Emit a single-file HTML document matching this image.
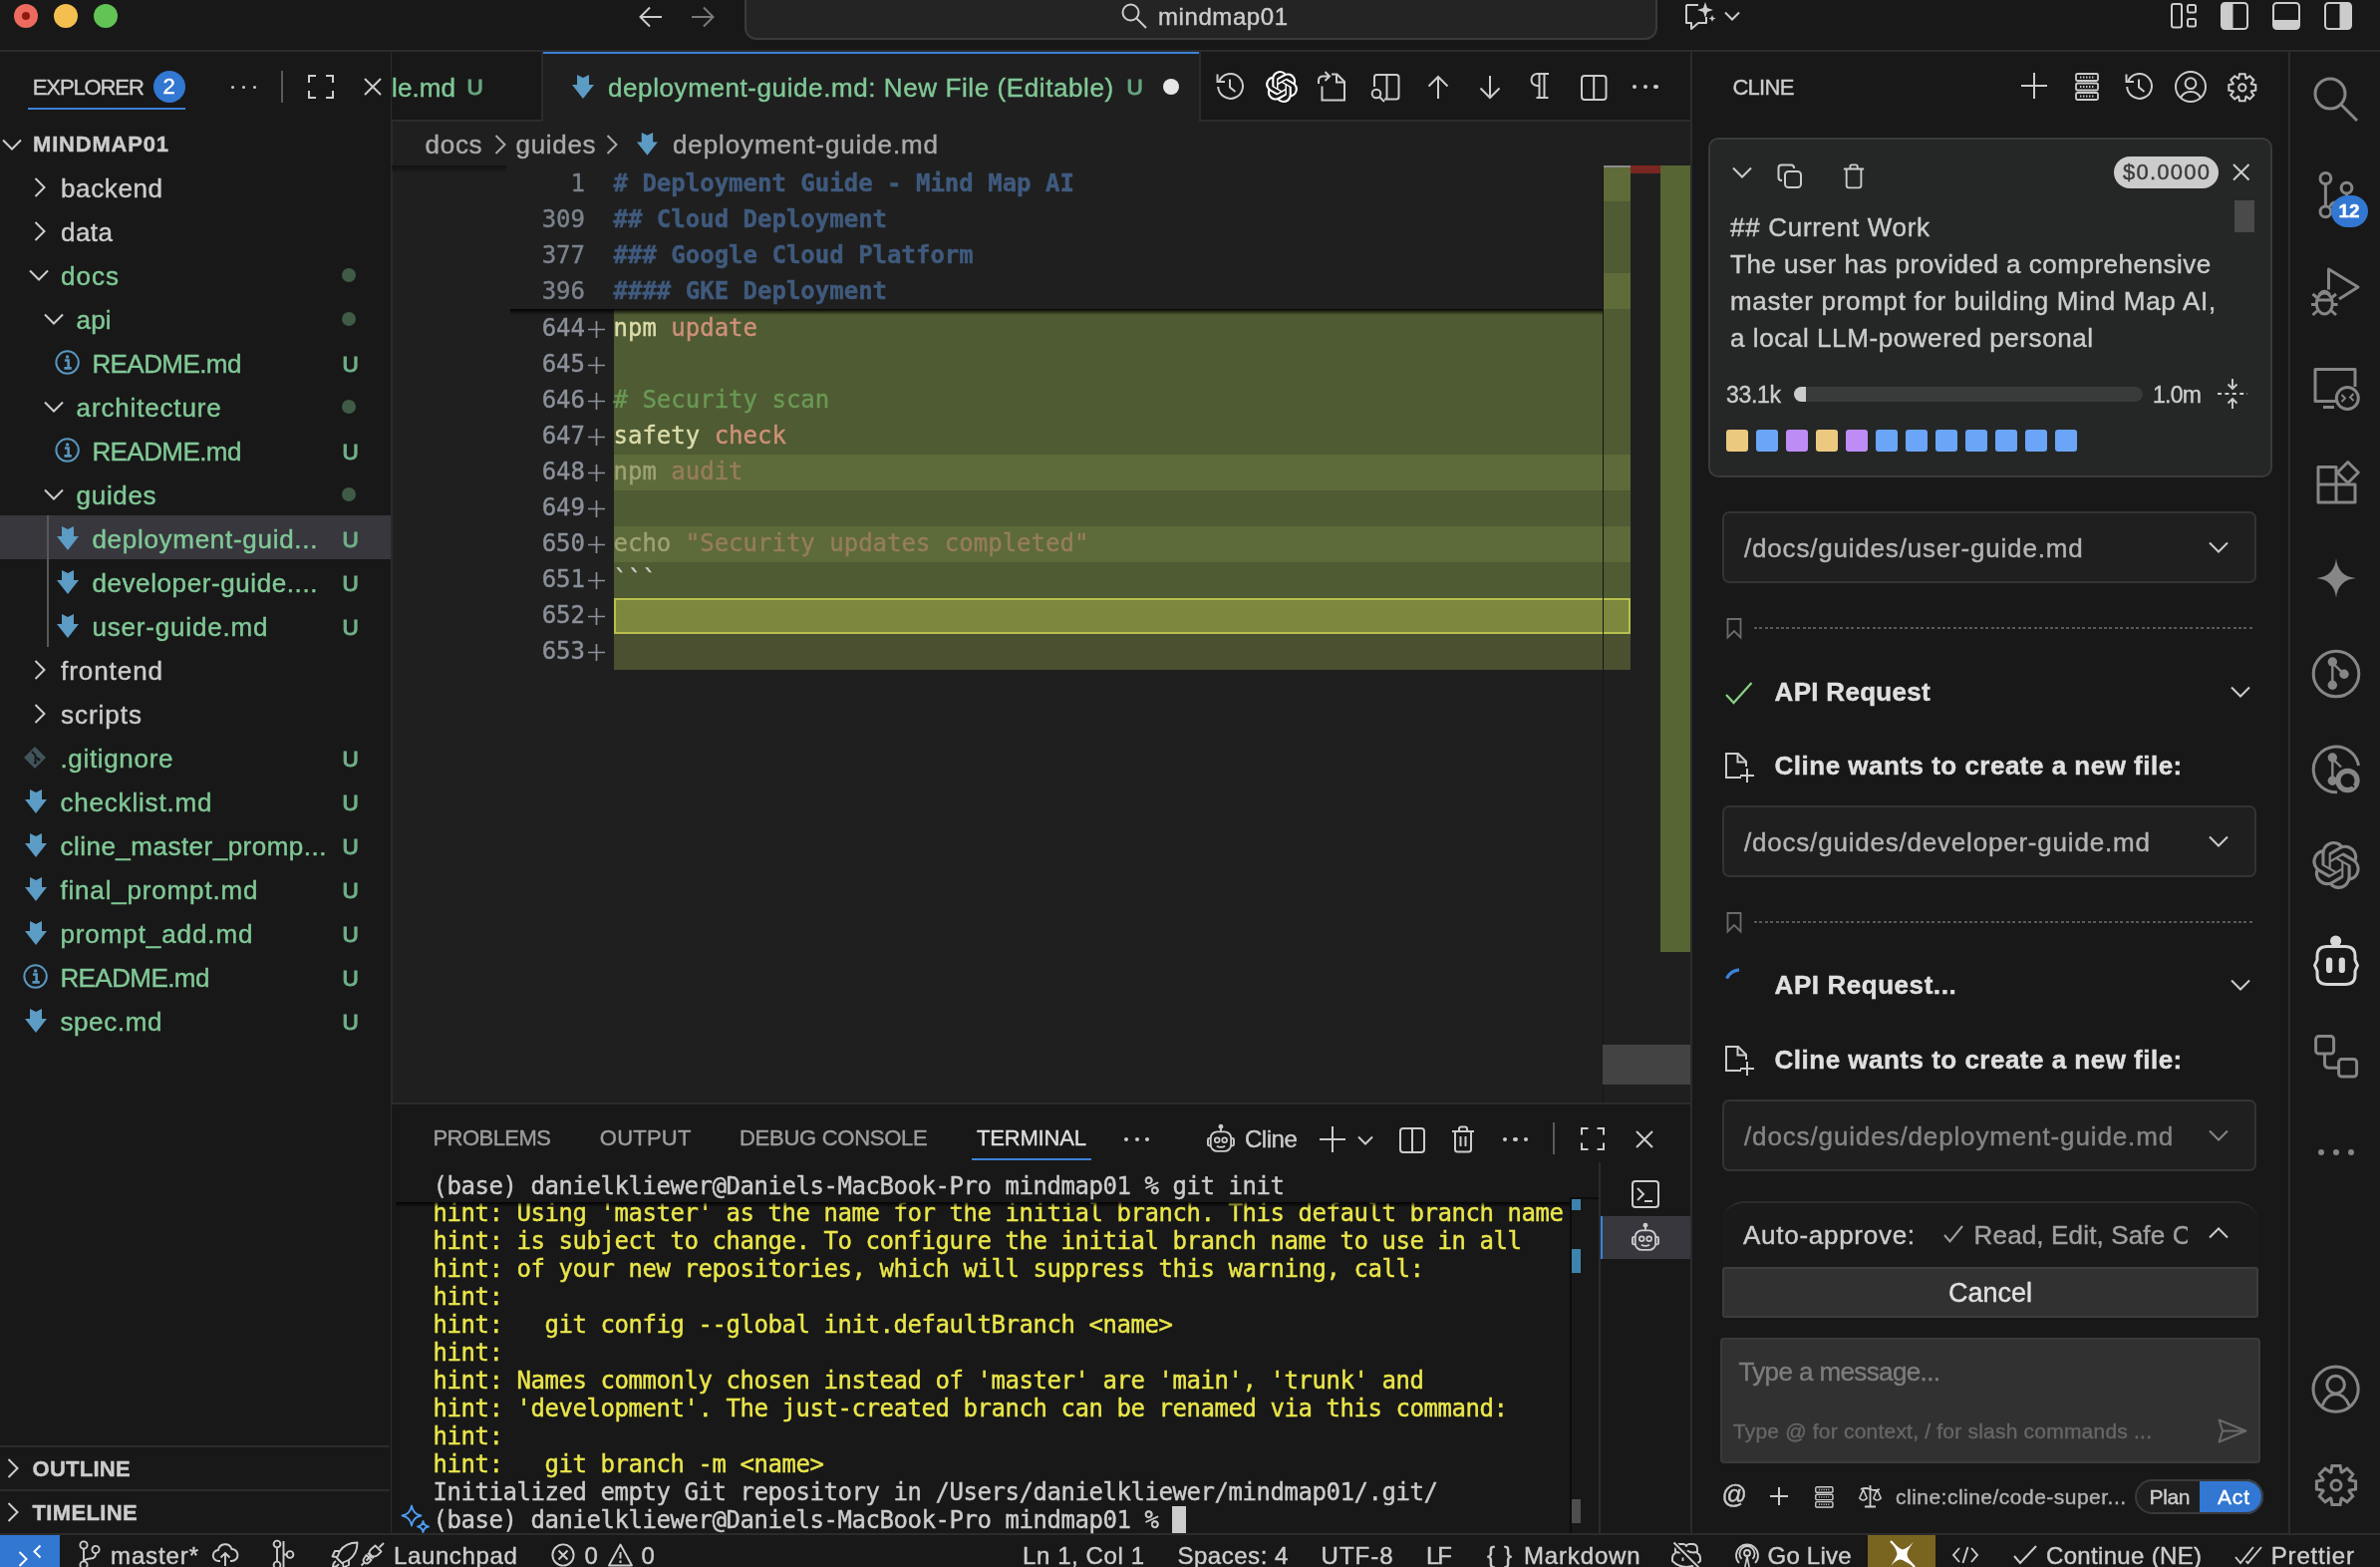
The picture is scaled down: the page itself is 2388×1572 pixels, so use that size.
<!DOCTYPE html>
<html lang="en"><head><meta charset="utf-8"><title>mindmap01</title>
<style>
html,body{margin:0;padding:0;background:#181818;}
body{width:2388px;height:1572px;overflow:hidden;position:relative;font-family:"Liberation Sans",sans-serif;color:#ccc;}
.t{position:absolute;white-space:pre;margin:0;-webkit-text-stroke:0.4px currentColor;}
.r{position:absolute;box-sizing:border-box;}
svg{overflow:visible}
#root{position:absolute;left:0;top:0;width:2388px;height:1572px;overflow:hidden;will-change:transform;}
</style></head><body><div id="root">

<div class="r" style="left:0px;top:0px;width:2388px;height:1572px;background:#181818;"></div>
<div class="r" style="left:394px;top:52px;width:1302px;height:1054px;background:#1f1f1f;"></div>
<div class="r" style="left:0px;top:50px;width:2388px;height:2px;background:#2b2b2b;"></div>
<div class="r" style="left:392px;top:52px;width:2px;height:1486px;background:#2b2b2b;"></div>
<div class="r" style="left:1696px;top:52px;width:2px;height:1486px;background:#2b2b2b;"></div>
<div class="r" style="left:2296px;top:52px;width:2px;height:1486px;background:#2b2b2b;"></div>
<div class="r" style="left:0px;top:1538px;width:2388px;height:2px;background:#2b2b2b;"></div>
<div class="r" style="left:393px;top:1106px;width:1303px;height:2px;background:#2b2b2b;"></div>
<div class="r" style="left:14px;top:4px;width:24px;height:24px;background:#ed6a5e;border-radius:50%;"></div>
<div class="r" style="left:54px;top:4px;width:24px;height:24px;background:#f5bf4f;border-radius:50%;"></div>
<div class="r" style="left:94px;top:4px;width:24px;height:24px;background:#61c454;border-radius:50%;"></div>
<div class="r" style="left:22px;top:12px;width:8px;height:8px;background:#8c1a10;border-radius:50%;"></div>
<svg class="r" style="left:640px;top:4px;" width="26" height="26" viewBox="0 0 26 26" fill="none"><path d="M24 13H3M12 3.5L2.5 13L12 22.5" stroke="#ccc" stroke-width="2"/></svg>
<svg class="r" style="left:692px;top:4px;" width="26" height="26" viewBox="0 0 26 26" fill="none"><path d="M2 13H23M14 3.5L23.5 13L14 22.5" stroke="#7a7a7a" stroke-width="2"/></svg>
<div class="r" style="left:747px;top:-14px;width:916px;height:54px;background:#242424;border:2px solid #3a3a3a;border-radius:12px;"></div>
<svg class="r" style="left:1124px;top:2px;" width="28" height="28" viewBox="0 0 28 28" fill="none"><circle cx="10.5" cy="10.5" r="8" stroke="#ccc" stroke-width="2"/><path d="M16.5 16.5L26 26" stroke="#ccc" stroke-width="2"/></svg>
<div class="t " style="left:1162.0px;top:-0.5px;font-size:24px;line-height:33px;color:#ccc;letter-spacing:0.576px;">mindmap01</div>
<svg class="r" style="left:1690px;top:2px;" width="32" height="28" viewBox="0 0 32 28" fill="none"><path d="M2 3H14M2 3V21H7V27L14 21H22V15" stroke="#ccc" stroke-width="2" stroke-linejoin="round"/><path d="M21 0L23 6L29 8L23 10L21 16L19 10L13 8L19 6Z" fill="#ccc"/><path d="M28 13L29 15.5L31.5 16.5L29 17.5L28 20L27 17.5L24.5 16.5L27 15.5Z" fill="#ccc"/></svg>
<svg class="r" style="left:1730px;top:11px;" width="16" height="10" viewBox="0 0 16 10" fill="none"><path d="M1 1.5L8 8.5L15 1.5" stroke="#ccc" stroke-width="2"/></svg>
<svg class="r" style="left:2178px;top:2px;" width="28" height="28" viewBox="0 0 28 28" fill="none"><rect x="1" y="2" width="10" height="23.5" rx="2" stroke="#ccc" stroke-width="2"/><rect x="17" y="3" width="8" height="7.5" rx="1.5" stroke="#ccc" stroke-width="2"/><rect x="17" y="17" width="8" height="7.5" rx="1.5" stroke="#ccc" stroke-width="2"/></svg>
<svg class="r" style="left:2228px;top:2px;" width="28" height="28" viewBox="0 0 28 28" fill="none"><rect x="1" y="1" width="26" height="26" rx="3.5" stroke="#ccc" stroke-width="2"/><path d="M2 2H12.5V26H2Z" fill="#ccc"/></svg>
<svg class="r" style="left:2280px;top:2px;" width="28" height="28" viewBox="0 0 28 28" fill="none"><rect x="1" y="1" width="26" height="26" rx="3.5" stroke="#ccc" stroke-width="2"/><path d="M2 18H26V26H2Z" fill="#ccc"/></svg>
<svg class="r" style="left:2332px;top:2px;" width="28" height="28" viewBox="0 0 28 28" fill="none"><rect x="1" y="1" width="26" height="26" rx="3.5" stroke="#ccc" stroke-width="2"/><path d="M15.5 2H26V26H15.5Z" fill="#ccc"/></svg>
<div class="t " style="left:32.8px;top:72.7px;font-size:22px;line-height:30px;color:#ccc;letter-spacing:-1.116px;">EXPLORER</div>
<div class="r" style="left:154px;top:71px;width:32px;height:32px;background:#3277d2;border-radius:50%;"></div>
<div class="t " style="left:163.5px;top:72.0px;font-size:22px;line-height:30px;color:#fff;">2</div>
<div class="r" style="left:28px;top:108px;width:158px;height:2px;background:#3b82d8;"></div>
<div class="r" style="left:232px;top:85.5px;width:3.4px;height:3.4px;background:#ccc;border-radius:50%;"></div>
<div class="r" style="left:243px;top:85.5px;width:3.4px;height:3.4px;background:#ccc;border-radius:50%;"></div>
<div class="r" style="left:254px;top:85.5px;width:3.4px;height:3.4px;background:#ccc;border-radius:50%;"></div>
<div class="r" style="left:282px;top:71px;width:2px;height:32px;background:#5a5a5a;"></div>
<svg class="r" style="left:309px;top:75px;" width="26" height="24" viewBox="0 0 26 24" fill="none"><path d="M1 8V1H8M18 1H25V8M25 16V23H18M8 23H1V16" stroke="#ccc" stroke-width="2"/></svg>
<svg class="r" style="left:365px;top:78px;" width="18" height="18" viewBox="0 0 18 18" fill="none"><path d="M1 1L17 17M17 1L1 17" stroke="#ccc" stroke-width="2"/></svg>
<svg class="r" style="left:2px;top:139px;" width="20" height="12" viewBox="0 0 20 12" fill="none"><path d="M1 1.5L10 10.5L19 1.5" stroke="#ccc" stroke-width="2"/></svg>
<div class="t " style="left:33.0px;top:130.3px;font-size:22px;line-height:30px;color:#ccc;font-weight:700;letter-spacing:0.803px;">MINDMAP01</div>
<div class="r" style="left:0px;top:517px;width:392px;height:44px;background:#37373d;"></div>
<div class="r" style="left:47px;top:517px;width:2px;height:132px;background:#585858;"></div>
<svg class="r" style="left:34px;top:178px;" width="12" height="20" viewBox="0 0 12 20" fill="none"><path d="M1.5 1L10.5 10L1.5 19" stroke="#ccc" stroke-width="2"/></svg>
<div class="t " style="left:61.0px;top:171.0px;font-size:26px;line-height:36px;color:#ccc;letter-spacing:0.622px;">backend</div>
<svg class="r" style="left:34px;top:222px;" width="12" height="20" viewBox="0 0 12 20" fill="none"><path d="M1.5 1L10.5 10L1.5 19" stroke="#ccc" stroke-width="2"/></svg>
<div class="t " style="left:61.0px;top:215.0px;font-size:26px;line-height:36px;color:#ccc;letter-spacing:0.474px;">data</div>
<svg class="r" style="left:29px;top:270px;" width="20" height="12" viewBox="0 0 20 12" fill="none"><path d="M1 1.5L10 10.5L19 1.5" stroke="#ccc" stroke-width="2"/></svg>
<div class="t " style="left:61.0px;top:259.0px;font-size:26px;line-height:36px;color:#80c896;letter-spacing:1.031px;">docs</div>
<div class="r" style="left:343px;top:269px;width:14px;height:14px;background:#3f5a45;border-radius:50%;"></div>
<svg class="r" style="left:44px;top:314px;" width="20" height="12" viewBox="0 0 20 12" fill="none"><path d="M1 1.5L10 10.5L19 1.5" stroke="#ccc" stroke-width="2"/></svg>
<div class="t " style="left:76.6px;top:303.0px;font-size:26px;line-height:36px;color:#80c896;letter-spacing:0.156px;">api</div>
<div class="r" style="left:343px;top:313px;width:14px;height:14px;background:#3f5a45;border-radius:50%;"></div>
<svg class="r" style="left:54.9px;top:351.4px;" width="25.2" height="25.2" viewBox="0 0 24 24" fill="none"><circle cx="12" cy="12" r="10.7" stroke="#5896be" stroke-width="1.9"/><path d="M9.5 10H13V17M9 17.5H16" stroke="#5896be" stroke-width="2.4"/><circle cx="12" cy="6.6" r="1.7" fill="#5896be"/></svg>
<div class="t " style="left:92.4px;top:347.0px;font-size:26px;line-height:36px;color:#80c896;letter-spacing:-0.572px;">README.md</div>
<div class="t " style="left:343.5px;top:349.5px;font-size:22.5px;line-height:31px;color:#6fb088;-webkit-text-stroke:1.1px #6fb088;">U</div>
<svg class="r" style="left:44px;top:402px;" width="20" height="12" viewBox="0 0 20 12" fill="none"><path d="M1 1.5L10 10.5L19 1.5" stroke="#ccc" stroke-width="2"/></svg>
<div class="t " style="left:76.6px;top:391.0px;font-size:26px;line-height:36px;color:#80c896;letter-spacing:0.837px;">architecture</div>
<div class="r" style="left:343px;top:401px;width:14px;height:14px;background:#3f5a45;border-radius:50%;"></div>
<svg class="r" style="left:54.9px;top:439.4px;" width="25.2" height="25.2" viewBox="0 0 24 24" fill="none"><circle cx="12" cy="12" r="10.7" stroke="#5896be" stroke-width="1.9"/><path d="M9.5 10H13V17M9 17.5H16" stroke="#5896be" stroke-width="2.4"/><circle cx="12" cy="6.6" r="1.7" fill="#5896be"/></svg>
<div class="t " style="left:92.4px;top:435.0px;font-size:26px;line-height:36px;color:#80c896;letter-spacing:-0.572px;">README.md</div>
<div class="t " style="left:343.5px;top:437.5px;font-size:22.5px;line-height:31px;color:#6fb088;-webkit-text-stroke:1.1px #6fb088;">U</div>
<svg class="r" style="left:44px;top:490px;" width="20" height="12" viewBox="0 0 20 12" fill="none"><path d="M1 1.5L10 10.5L19 1.5" stroke="#ccc" stroke-width="2"/></svg>
<div class="t " style="left:76.6px;top:479.0px;font-size:26px;line-height:36px;color:#80c896;letter-spacing:0.681px;">guides</div>
<div class="r" style="left:343px;top:489px;width:14px;height:14px;background:#3f5a45;border-radius:50%;"></div>
<svg class="r" style="left:57px;top:528px;" width="22" height="24" viewBox="0 0 22 24" fill="none"><path d="M5 0L11 3L17 0V10H22L11 24L0 10H5Z" fill="#5b9bc4"/></svg>
<div class="t " style="left:92.4px;top:523.0px;font-size:26px;line-height:36px;color:#80c896;letter-spacing:0.716px;">deployment-guid...</div>
<div class="t " style="left:343.5px;top:525.5px;font-size:22.5px;line-height:31px;color:#6fb088;-webkit-text-stroke:1.1px #6fb088;">U</div>
<svg class="r" style="left:57px;top:572px;" width="22" height="24" viewBox="0 0 22 24" fill="none"><path d="M5 0L11 3L17 0V10H22L11 24L0 10H5Z" fill="#5b9bc4"/></svg>
<div class="t " style="left:92.4px;top:567.0px;font-size:26px;line-height:36px;color:#80c896;letter-spacing:0.595px;">developer-guide....</div>
<div class="t " style="left:343.5px;top:569.5px;font-size:22.5px;line-height:31px;color:#6fb088;-webkit-text-stroke:1.1px #6fb088;">U</div>
<svg class="r" style="left:57px;top:616px;" width="22" height="24" viewBox="0 0 22 24" fill="none"><path d="M5 0L11 3L17 0V10H22L11 24L0 10H5Z" fill="#5b9bc4"/></svg>
<div class="t " style="left:92.4px;top:611.0px;font-size:26px;line-height:36px;color:#80c896;letter-spacing:0.822px;">user-guide.md</div>
<div class="t " style="left:343.5px;top:613.5px;font-size:22.5px;line-height:31px;color:#6fb088;-webkit-text-stroke:1.1px #6fb088;">U</div>
<svg class="r" style="left:34px;top:662px;" width="12" height="20" viewBox="0 0 12 20" fill="none"><path d="M1.5 1L10.5 10L1.5 19" stroke="#ccc" stroke-width="2"/></svg>
<div class="t " style="left:61.0px;top:655.0px;font-size:26px;line-height:36px;color:#ccc;letter-spacing:0.949px;">frontend</div>
<svg class="r" style="left:34px;top:706px;" width="12" height="20" viewBox="0 0 12 20" fill="none"><path d="M1.5 1L10.5 10L1.5 19" stroke="#ccc" stroke-width="2"/></svg>
<div class="t " style="left:61.0px;top:699.0px;font-size:26px;line-height:36px;color:#ccc;letter-spacing:0.982px;">scripts</div>
<svg class="r" style="left:24px;top:749px;" width="22" height="22" viewBox="0 0 22 22" fill="none"><path d="M11 0L22 11L11 22L0 11Z" fill="#41535b"/><path d="M8 5L11.5 8.5V16M11.5 10L15 13" stroke="#181818" stroke-width="1.8"/><circle cx="11.5" cy="16" r="1.6" fill="#181818"/><circle cx="15" cy="13" r="1.6" fill="#181818"/></svg>
<div class="t " style="left:60.4px;top:743.0px;font-size:26px;line-height:36px;color:#80c896;letter-spacing:0.675px;">.gitignore</div>
<div class="t " style="left:343.5px;top:745.5px;font-size:22.5px;line-height:31px;color:#6fb088;-webkit-text-stroke:1.1px #6fb088;">U</div>
<svg class="r" style="left:25px;top:792px;" width="22" height="24" viewBox="0 0 22 24" fill="none"><path d="M5 0L11 3L17 0V10H22L11 24L0 10H5Z" fill="#5b9bc4"/></svg>
<div class="t " style="left:60.4px;top:787.0px;font-size:26px;line-height:36px;color:#80c896;letter-spacing:0.817px;">checklist.md</div>
<div class="t " style="left:343.5px;top:789.5px;font-size:22.5px;line-height:31px;color:#6fb088;-webkit-text-stroke:1.1px #6fb088;">U</div>
<svg class="r" style="left:25px;top:836px;" width="22" height="24" viewBox="0 0 22 24" fill="none"><path d="M5 0L11 3L17 0V10H22L11 24L0 10H5Z" fill="#5b9bc4"/></svg>
<div class="t " style="left:60.4px;top:831.0px;font-size:26px;line-height:36px;color:#80c896;letter-spacing:0.493px;">cline_master_promp...</div>
<div class="t " style="left:343.5px;top:833.5px;font-size:22.5px;line-height:31px;color:#6fb088;-webkit-text-stroke:1.1px #6fb088;">U</div>
<svg class="r" style="left:25px;top:880px;" width="22" height="24" viewBox="0 0 22 24" fill="none"><path d="M5 0L11 3L17 0V10H22L11 24L0 10H5Z" fill="#5b9bc4"/></svg>
<div class="t " style="left:60.4px;top:875.0px;font-size:26px;line-height:36px;color:#80c896;letter-spacing:0.831px;">final_prompt.md</div>
<div class="t " style="left:343.5px;top:877.5px;font-size:22.5px;line-height:31px;color:#6fb088;-webkit-text-stroke:1.1px #6fb088;">U</div>
<svg class="r" style="left:25px;top:924px;" width="22" height="24" viewBox="0 0 22 24" fill="none"><path d="M5 0L11 3L17 0V10H22L11 24L0 10H5Z" fill="#5b9bc4"/></svg>
<div class="t " style="left:60.4px;top:919.0px;font-size:26px;line-height:36px;color:#80c896;letter-spacing:0.914px;">prompt_add.md</div>
<div class="t " style="left:343.5px;top:921.5px;font-size:22.5px;line-height:31px;color:#6fb088;-webkit-text-stroke:1.1px #6fb088;">U</div>
<svg class="r" style="left:22.9px;top:967.4px;" width="25.2" height="25.2" viewBox="0 0 24 24" fill="none"><circle cx="12" cy="12" r="10.7" stroke="#5896be" stroke-width="1.9"/><path d="M9.5 10H13V17M9 17.5H16" stroke="#5896be" stroke-width="2.4"/><circle cx="12" cy="6.6" r="1.7" fill="#5896be"/></svg>
<div class="t " style="left:60.4px;top:963.0px;font-size:26px;line-height:36px;color:#80c896;letter-spacing:-0.572px;">README.md</div>
<div class="t " style="left:343.5px;top:965.5px;font-size:22.5px;line-height:31px;color:#6fb088;-webkit-text-stroke:1.1px #6fb088;">U</div>
<svg class="r" style="left:25px;top:1012px;" width="22" height="24" viewBox="0 0 22 24" fill="none"><path d="M5 0L11 3L17 0V10H22L11 24L0 10H5Z" fill="#5b9bc4"/></svg>
<div class="t " style="left:60.4px;top:1007.0px;font-size:26px;line-height:36px;color:#80c896;letter-spacing:0.628px;">spec.md</div>
<div class="t " style="left:343.5px;top:1009.5px;font-size:22.5px;line-height:31px;color:#6fb088;-webkit-text-stroke:1.1px #6fb088;">U</div>
<div class="r" style="left:0px;top:1450px;width:391px;height:2px;background:#2b2b2b;"></div>
<svg class="r" style="left:7px;top:1463px;" width="12" height="20" viewBox="0 0 12 20" fill="none"><path d="M1.5 1L10.5 10L1.5 19" stroke="#ccc" stroke-width="2"/></svg>
<div class="t " style="left:32.6px;top:1459.0px;font-size:22px;line-height:30px;color:#ccc;font-weight:700;letter-spacing:0.242px;">OUTLINE</div>
<div class="r" style="left:0px;top:1494px;width:391px;height:2px;background:#2b2b2b;"></div>
<svg class="r" style="left:7px;top:1507px;" width="12" height="20" viewBox="0 0 12 20" fill="none"><path d="M1.5 1L10.5 10L1.5 19" stroke="#ccc" stroke-width="2"/></svg>
<div class="t " style="left:32.6px;top:1503.0px;font-size:22px;line-height:30px;color:#ccc;font-weight:700;letter-spacing:0.335px;">TIMELINE</div>
<div class="r" style="left:393px;top:52px;width:1303px;height:68px;background:#181818;"></div>
<div class="r" style="left:393px;top:120px;width:1303px;height:2px;background:#2b2b2b;"></div>
<div class="r" style="left:543px;top:52px;width:2px;height:70px;background:#2b2b2b;"></div>
<div class="t " style="left:393.0px;top:69.5px;font-size:26px;line-height:36px;color:#80c896;letter-spacing:0.109px;">le.md</div>
<div class="t " style="left:468.5px;top:72.0px;font-size:22.5px;line-height:31px;color:#67a57f;-webkit-text-stroke:1.1px #67a57f;">U</div>
<div class="r" style="left:545px;top:52px;width:658px;height:70px;background:#1f1f1f;"></div>
<div class="r" style="left:545px;top:52px;width:658px;height:2px;background:#3b82d8;"></div>
<div class="r" style="left:1203px;top:52px;width:2px;height:70px;background:#2b2b2b;"></div>
<svg class="r" style="left:574px;top:75px;" width="22" height="24" viewBox="0 0 22 24" fill="none"><path d="M5 0L11 3L17 0V10H22L11 24L0 10H5Z" fill="#5b9bc4"/></svg>
<div class="t " style="left:610.0px;top:69.5px;font-size:26px;line-height:36px;color:#80c896;letter-spacing:0.590px;">deployment-guide.md: New File (Editable)</div>
<div class="t " style="left:1130.5px;top:72.0px;font-size:22.5px;line-height:31px;color:#67a57f;-webkit-text-stroke:1.1px #67a57f;">U</div>
<div class="r" style="left:1166.5px;top:79px;width:16px;height:16px;background:#e6e6e6;border-radius:50%;"></div>
<svg class="r" style="left:1219px;top:72px;" width="30" height="30" viewBox="0 0 30 30" fill="none"><path d="M4.2 9.5A12.4 12.4 0 1 1 3.2 15" stroke="#ccc" stroke-width="2"/><path d="M2.5 2.5V10H10" stroke="#ccc" stroke-width="2"/><path d="M15 7.5V15.5L20.5 20" stroke="#ccc" stroke-width="2"/></svg>
<svg class="r" style="left:1270px;top:71px" width="32" height="32" viewBox="0 0 24 24"><path fill="#fff" d="M22.2819 9.8211a5.9847 5.9847 0 0 0-.5157-4.9108 6.0462 6.0462 0 0 0-6.5098-2.9A6.0651 6.0651 0 0 0 4.9807 4.1818a5.9847 5.9847 0 0 0-3.9977 2.9 6.0462 6.0462 0 0 0 .7427 7.0966 5.98 5.98 0 0 0 .511 4.9107 6.051 6.051 0 0 0 6.5146 2.9001A5.9847 5.9847 0 0 0 13.2599 24a6.0557 6.0557 0 0 0 5.7718-4.2058 5.9894 5.9894 0 0 0 3.9977-2.9001 6.0557 6.0557 0 0 0-.7475-7.0729zm-9.022 12.6081a4.4755 4.4755 0 0 1-2.8764-1.0408l.1419-.0804 4.7783-2.7582a.7948.7948 0 0 0 .3927-.6813v-6.7369l2.02 1.1686a.071.071 0 0 1 .038.052v5.5826a4.504 4.504 0 0 1-4.4945 4.4944zm-9.6607-4.1254a4.4708 4.4708 0 0 1-.5346-3.0137l.142.0852 4.783 2.7582a.7712.7712 0 0 0 .7806 0l5.8428-3.3685v2.3324a.0804.0804 0 0 1-.0332.0615L9.74 19.9502a4.4992 4.4992 0 0 1-6.1408-1.6464zM2.3408 7.8956a4.485 4.485 0 0 1 2.3655-1.9728V11.6a.7664.7664 0 0 0 .3879.6765l5.8144 3.3543-2.0201 1.1685a.0757.0757 0 0 1-.071 0l-4.8303-2.7865A4.504 4.504 0 0 1 2.3408 7.872zm16.5963 3.8558L13.1038 8.364 15.1192 7.2a.0757.0757 0 0 1 .071 0l4.8303 2.7913a4.4944 4.4944 0 0 1-.6765 8.1042v-5.6772a.79.79 0 0 0-.407-.667zm2.0107-3.0231l-.142-.0852-4.7735-2.7818a.7759.7759 0 0 0-.7854 0L9.409 9.2297V6.8974a.0662.0662 0 0 1 .0284-.0615l4.8303-2.7866a4.4992 4.4992 0 0 1 6.6802 4.66zM8.3065 12.863l-2.02-1.1638a.0804.0804 0 0 1-.038-.0567V6.0742a4.4992 4.4992 0 0 1 7.3757-3.4537l-.142.0805L8.704 5.459a.7948.7948 0 0 0-.3927.6813zm1.0976-2.3654l2.602-1.4998 2.6069 1.4998v2.9994l-2.5974 1.4997-2.6067-1.4997Z"/></svg>
<svg class="r" style="left:1321px;top:71px;" width="32" height="32" viewBox="0 0 32 32" fill="none"><path d="M5.5 15.5V29.5H28V11L20.5 3.5H15" stroke="#ccc" stroke-width="2"/><path d="M20 3.5V11.5H28" stroke="#ccc" stroke-width="2"/><path d="M2 13V10Q2 5.5 6.5 5.5H12.5M8.5 1L13 5.5L8.5 10" stroke="#ccc" stroke-width="2"/></svg>
<svg class="r" style="left:1375px;top:74px;" width="30" height="30" viewBox="0 0 30 30" fill="none"><path d="M4 13V3.5Q4 1 6.5 1H26Q28.5 1 28.5 3.5V23Q28.5 25.5 26 25.5H14" stroke="#ccc" stroke-width="2"/><path d="M16.5 1V25.5" stroke="#ccc" stroke-width="2"/><circle cx="6" cy="20" r="4.3" stroke="#ccc" stroke-width="2"/><path d="M9 23L14 28" stroke="#ccc" stroke-width="2"/></svg>
<svg class="r" style="left:1432px;top:75px;" width="22" height="25" viewBox="0 0 22 25" fill="none"><path d="M11 24V2M1.5 11.5L11 2L20.5 11.5" stroke="#ccc" stroke-width="2"/></svg>
<svg class="r" style="left:1484px;top:75px;" width="22" height="25" viewBox="0 0 22 25" fill="none"><path d="M11 1V23M1.5 13.5L11 23L20.5 13.5" stroke="#ccc" stroke-width="2"/></svg>
<svg class="r" style="left:1534px;top:73px;" width="22" height="26" viewBox="0 0 22 26" fill="none"><path d="M10.5 13H8.5A6 6 0 0 1 8.5 1H20M10.5 1V24.5M15.5 1V24.5M7.5 25H19.5" stroke="#ccc" stroke-width="2"/></svg>
<svg class="r" style="left:1586px;top:75px;" width="27" height="26" viewBox="0 0 27 26" fill="none"><rect x="1" y="1" width="24.5" height="24" rx="3" stroke="#ccc" stroke-width="2"/><path d="M13.2 1V25" stroke="#ccc" stroke-width="2"/></svg>
<div class="r" style="left:1638px;top:84.8px;width:4.4px;height:4.4px;background:#ccc;border-radius:50%;"></div>
<div class="r" style="left:1648.7px;top:84.8px;width:4.4px;height:4.4px;background:#ccc;border-radius:50%;"></div>
<div class="r" style="left:1659.4px;top:84.8px;width:4.4px;height:4.4px;background:#ccc;border-radius:50%;"></div>
<div class="t " style="left:426.6px;top:127.2px;font-size:26px;line-height:36px;color:#a9a9a9;letter-spacing:0.698px;">docs</div>
<svg class="r" style="left:495.5px;top:135px;" width="12" height="20" viewBox="0 0 12 20" fill="none"><path d="M1.5 1L10.5 10L1.5 19" stroke="#a9a9a9" stroke-width="2"/></svg>
<div class="t " style="left:517.5px;top:127.2px;font-size:26px;line-height:36px;color:#a9a9a9;letter-spacing:0.681px;">guides</div>
<svg class="r" style="left:608px;top:135px;" width="12" height="20" viewBox="0 0 12 20" fill="none"><path d="M1.5 1L10.5 10L1.5 19" stroke="#a9a9a9" stroke-width="2"/></svg>
<svg class="r" style="left:638.5px;top:132.6px;" width="20.9" height="22.8" viewBox="0 0 22 24" fill="none"><path d="M5 0L11 3L17 0V10H22L11 24L0 10H5Z" fill="#5b9bc4"/></svg>
<div class="t " style="left:675.0px;top:127.2px;font-size:26px;line-height:36px;color:#a9a9a9;letter-spacing:0.891px;">deployment-guide.md</div>
<div class="r" style="left:393px;top:166px;width:115px;height:8px;background:linear-gradient(#111,rgba(17,17,17,0));"></div>
<div class="r" style="left:616px;top:310px;width:1020px;height:362px;background:#4f5b32;"></div>
<div class="r" style="left:616px;top:456px;width:1020px;height:36px;background:#5d6a39;"></div>
<div class="r" style="left:616px;top:528px;width:1020px;height:36px;background:#5d6a39;"></div>
<div class="r" style="left:616px;top:600px;width:1020px;height:36px;background:#7d873d;border:2px solid #b9c04d;"></div>
<div class="r" style="left:616px;top:636px;width:1020px;height:36px;background:#4a5030;"></div>
<div class="r" style="left:1608px;top:166px;width:28px;height:144px;background:#4f5b32;"></div>
<div class="r" style="left:1608px;top:166px;width:28px;height:36px;background:#5f6b38;"></div>
<div class="r" style="left:1608px;top:274px;width:28px;height:36px;background:#5f6b38;"></div>
<div class="r" style="left:1608px;top:166px;width:28px;height:2px;background:#8a8a8a;"></div>
<div class="r" style="left:1636px;top:166px;width:30px;height:8px;background:#7a2621;"></div>
<div class="r" style="left:1666px;top:166px;width:30px;height:789px;background:#576532;"></div>
<div class="r" style="left:1608px;top:166px;width:1px;height:940px;background:#151515;"></div>
<div class="r" style="left:1608px;top:1048px;width:88px;height:40px;background:#434343;"></div>
<div class="r" style="left:512px;top:310px;width:1096px;height:6px;background:linear-gradient(rgba(0,0,0,0.95),rgba(0,0,0,0.5) 45%,rgba(0,0,0,0));"></div>
<div class="r" style="left:512px;top:166px;width:1096px;height:144px;background:#1f1f1f;"></div>
<div class="t " style="right:1801.0px;top:167.5px;font-size:24px;line-height:33px;color:#7b828c;font-family:'DejaVu Sans Mono','Liberation Mono',monospace;">1</div>
<div class="t " style="left:615.5px;top:167.5px;font-size:24px;line-height:33px;color:#3f5a7d;font-weight:700;font-family:'DejaVu Sans Mono','Liberation Mono',monospace;"># Deployment Guide - Mind Map AI</div>
<div class="t " style="right:1801.0px;top:203.5px;font-size:24px;line-height:33px;color:#7b828c;font-family:'DejaVu Sans Mono','Liberation Mono',monospace;">309</div>
<div class="t " style="left:615.5px;top:203.5px;font-size:24px;line-height:33px;color:#3f5a7d;font-weight:700;font-family:'DejaVu Sans Mono','Liberation Mono',monospace;">## Cloud Deployment</div>
<div class="t " style="right:1801.0px;top:239.5px;font-size:24px;line-height:33px;color:#7b828c;font-family:'DejaVu Sans Mono','Liberation Mono',monospace;">377</div>
<div class="t " style="left:615.5px;top:239.5px;font-size:24px;line-height:33px;color:#3f5a7d;font-weight:700;font-family:'DejaVu Sans Mono','Liberation Mono',monospace;">### Google Cloud Platform</div>
<div class="t " style="right:1801.0px;top:275.5px;font-size:24px;line-height:33px;color:#7b828c;font-family:'DejaVu Sans Mono','Liberation Mono',monospace;">396</div>
<div class="t " style="left:615.5px;top:275.5px;font-size:24px;line-height:33px;color:#3f5a7d;font-weight:700;font-family:'DejaVu Sans Mono','Liberation Mono',monospace;">#### GKE Deployment</div>
<div class="t " style="right:1801.0px;top:313.0px;font-size:24px;line-height:33px;color:#8b919a;font-family:'DejaVu Sans Mono','Liberation Mono',monospace;">644</div>
<svg class="r" style="left:590px;top:322px;" width="17" height="17" viewBox="0 0 17 17" fill="none"><path d="M8.5 0V17M0 8.5H17" stroke="#8b919a" stroke-width="1.7"/></svg>
<div class="t " style="left:615.5px;top:313.0px;font-size:24px;line-height:33px;color:#ccc;font-family:'DejaVu Sans Mono','Liberation Mono',monospace;"><span style="color:#dcdcaa">npm</span><span style="color:#ce9178"> update</span></div>
<div class="t " style="right:1801.0px;top:349.0px;font-size:24px;line-height:33px;color:#8b919a;font-family:'DejaVu Sans Mono','Liberation Mono',monospace;">645</div>
<svg class="r" style="left:590px;top:358px;" width="17" height="17" viewBox="0 0 17 17" fill="none"><path d="M8.5 0V17M0 8.5H17" stroke="#8b919a" stroke-width="1.7"/></svg>
<div class="t " style="right:1801.0px;top:385.0px;font-size:24px;line-height:33px;color:#8b919a;font-family:'DejaVu Sans Mono','Liberation Mono',monospace;">646</div>
<svg class="r" style="left:590px;top:394px;" width="17" height="17" viewBox="0 0 17 17" fill="none"><path d="M8.5 0V17M0 8.5H17" stroke="#8b919a" stroke-width="1.7"/></svg>
<div class="t " style="left:615.5px;top:385.0px;font-size:24px;line-height:33px;color:#ccc;font-family:'DejaVu Sans Mono','Liberation Mono',monospace;"><span style="color:#6a9955"># Security scan</span></div>
<div class="t " style="right:1801.0px;top:421.0px;font-size:24px;line-height:33px;color:#8b919a;font-family:'DejaVu Sans Mono','Liberation Mono',monospace;">647</div>
<svg class="r" style="left:590px;top:430px;" width="17" height="17" viewBox="0 0 17 17" fill="none"><path d="M8.5 0V17M0 8.5H17" stroke="#8b919a" stroke-width="1.7"/></svg>
<div class="t " style="left:615.5px;top:421.0px;font-size:24px;line-height:33px;color:#ccc;font-family:'DejaVu Sans Mono','Liberation Mono',monospace;"><span style="color:#dcdcaa">safety</span><span style="color:#ce9178"> check</span></div>
<div class="t " style="right:1801.0px;top:457.0px;font-size:24px;line-height:33px;color:#8b919a;font-family:'DejaVu Sans Mono','Liberation Mono',monospace;">648</div>
<svg class="r" style="left:590px;top:466px;" width="17" height="17" viewBox="0 0 17 17" fill="none"><path d="M8.5 0V17M0 8.5H17" stroke="#8b919a" stroke-width="1.7"/></svg>
<div class="t " style="left:615.5px;top:457.0px;font-size:24px;line-height:33px;color:#ccc;font-family:'DejaVu Sans Mono','Liberation Mono',monospace;opacity:0.5;"><span style="color:#dcdcaa">npm</span><span style="color:#ce9178"> audit</span></div>
<div class="t " style="right:1801.0px;top:493.0px;font-size:24px;line-height:33px;color:#8b919a;font-family:'DejaVu Sans Mono','Liberation Mono',monospace;">649</div>
<svg class="r" style="left:590px;top:502px;" width="17" height="17" viewBox="0 0 17 17" fill="none"><path d="M8.5 0V17M0 8.5H17" stroke="#8b919a" stroke-width="1.7"/></svg>
<div class="t " style="right:1801.0px;top:529.0px;font-size:24px;line-height:33px;color:#8b919a;font-family:'DejaVu Sans Mono','Liberation Mono',monospace;">650</div>
<svg class="r" style="left:590px;top:538px;" width="17" height="17" viewBox="0 0 17 17" fill="none"><path d="M8.5 0V17M0 8.5H17" stroke="#8b919a" stroke-width="1.7"/></svg>
<div class="t " style="left:615.5px;top:529.0px;font-size:24px;line-height:33px;color:#ccc;font-family:'DejaVu Sans Mono','Liberation Mono',monospace;opacity:0.5;"><span style="color:#dcdcaa">echo</span><span style="color:#ce9178"> "Security updates completed"</span></div>
<div class="t " style="right:1801.0px;top:565.0px;font-size:24px;line-height:33px;color:#8b919a;font-family:'DejaVu Sans Mono','Liberation Mono',monospace;">651</div>
<svg class="r" style="left:590px;top:574px;" width="17" height="17" viewBox="0 0 17 17" fill="none"><path d="M8.5 0V17M0 8.5H17" stroke="#8b919a" stroke-width="1.7"/></svg>
<div class="t " style="left:615.5px;top:565.0px;font-size:24px;line-height:33px;color:#ccc;font-family:'DejaVu Sans Mono','Liberation Mono',monospace;"><span style="color:#cccccc">```</span></div>
<div class="t " style="right:1801.0px;top:601.0px;font-size:24px;line-height:33px;color:#8b919a;font-family:'DejaVu Sans Mono','Liberation Mono',monospace;">652</div>
<svg class="r" style="left:590px;top:610px;" width="17" height="17" viewBox="0 0 17 17" fill="none"><path d="M8.5 0V17M0 8.5H17" stroke="#8b919a" stroke-width="1.7"/></svg>
<div class="t " style="right:1801.0px;top:637.0px;font-size:24px;line-height:33px;color:#8b919a;font-family:'DejaVu Sans Mono','Liberation Mono',monospace;">653</div>
<svg class="r" style="left:590px;top:646px;" width="17" height="17" viewBox="0 0 17 17" fill="none"><path d="M8.5 0V17M0 8.5H17" stroke="#8b919a" stroke-width="1.7"/></svg>
<div class="r" style="left:393px;top:1108px;width:1303px;height:430px;background:#181818;"></div>
<div class="t " style="left:434.4px;top:1127.0px;font-size:22px;line-height:30px;color:#9d9d9d;letter-spacing:-0.521px;">PROBLEMS</div>
<div class="t " style="left:601.8px;top:1127.0px;font-size:22px;line-height:30px;color:#9d9d9d;letter-spacing:0.232px;">OUTPUT</div>
<div class="t " style="left:742.0px;top:1127.0px;font-size:22px;line-height:30px;color:#9d9d9d;letter-spacing:-0.268px;">DEBUG CONSOLE</div>
<div class="t " style="left:980.0px;top:1127.0px;font-size:22px;line-height:30px;color:#dedede;letter-spacing:-0.176px;">TERMINAL</div>
<div class="r" style="left:974.5px;top:1162px;width:120px;height:2px;background:#3b82d8;"></div>
<div class="r" style="left:1128px;top:1141px;width:4.4px;height:4.4px;background:#ccc;border-radius:50%;"></div>
<div class="r" style="left:1138.5px;top:1141px;width:4.4px;height:4.4px;background:#ccc;border-radius:50%;"></div>
<div class="r" style="left:1149px;top:1141px;width:4.4px;height:4.4px;background:#ccc;border-radius:50%;"></div>
<svg class="r" style="left:1211.35px;top:1126.69px;" width="27.9" height="29.76" viewBox="0 0 30 32" fill="none"><circle cx="15" cy="3.4" r="2.6" fill="#ccc"/><path d="M15 5V9" stroke="#ccc" stroke-width="2"/><rect x="4" y="9" width="22" height="21" rx="7" stroke="#ccc" stroke-width="2"/><path d="M4 16H2.5Q1 16 1 17.5V22.5Q1 24 2.5 24H4M26 16H27.5Q29 16 29 17.5V22.5Q29 24 27.5 24H26" stroke="#ccc" stroke-width="2"/><circle cx="11" cy="18" r="2.6" stroke="#ccc" stroke-width="1.8"/><circle cx="19" cy="18" r="2.6" stroke="#ccc" stroke-width="1.8"/><path d="M10.5 24.5Q15 27 19.5 24.5" stroke="#ccc" stroke-width="1.8"/></svg>
<div class="t " style="left:1249.0px;top:1125.5px;font-size:24px;line-height:33px;color:#ccc;letter-spacing:-0.468px;">Cline</div>
<svg class="r" style="left:1324px;top:1130px;" width="26" height="26" viewBox="0 0 26 26" fill="none"><path d="M13 0V26M0 13H26" stroke="#ccc" stroke-width="2"/></svg>
<svg class="r" style="left:1362px;top:1139px;" width="16" height="10" viewBox="0 0 16 10" fill="none"><path d="M1 1.5L8 8.5L15 1.5" stroke="#ccc" stroke-width="2"/></svg>
<svg class="r" style="left:1404px;top:1130.5px;" width="26" height="26" viewBox="0 0 26 26" fill="none"><rect x="1" y="1" width="24" height="24" rx="3" stroke="#ccc" stroke-width="2"/><path d="M13 1V25" stroke="#ccc" stroke-width="2"/></svg>
<svg class="r" style="left:1456px;top:1129px;" width="24" height="28" viewBox="0 0 24 28" fill="none"><path d="M1 6H23M8 6V3.5Q8 1.5 10 1.5H14Q16 1.5 16 3.5V6M4 6V24Q4 26.5 6.5 26.5H17.5Q20 26.5 20 24V6" stroke="#ccc" stroke-width="2"/><path d="M9.5 11V21M14.5 11V21" stroke="#ccc" stroke-width="2"/></svg>
<div class="r" style="left:1507.5px;top:1141px;width:4.4px;height:4.4px;background:#ccc;border-radius:50%;"></div>
<div class="r" style="left:1518.2px;top:1141px;width:4.4px;height:4.4px;background:#ccc;border-radius:50%;"></div>
<div class="r" style="left:1528.9px;top:1141px;width:4.4px;height:4.4px;background:#ccc;border-radius:50%;"></div>
<div class="r" style="left:1557.5px;top:1126px;width:2px;height:32px;background:#5a5a5a;"></div>
<svg class="r" style="left:1586px;top:1131px;" width="24" height="23" viewBox="0 0 24 23" fill="none"><path d="M1 7.5V1H7.5M16.5 1H23V7.5M23 15.5V22H16.5M7.5 22H1V15.5" stroke="#ccc" stroke-width="2"/></svg>
<svg class="r" style="left:1641px;top:1133.5px;" width="18" height="18" viewBox="0 0 18 18" fill="none"><path d="M1 1L17 17M17 1L1 17" stroke="#ccc" stroke-width="2"/></svg>
<div class="t " style="left:434.4px;top:1200.5px;font-size:24px;line-height:33px;color:#eae64a;font-family:'DejaVu Sans Mono','Liberation Mono',monospace;letter-spacing:-0.449px;">hint: Using 'master' as the name for the initial branch. This default branch name</div>
<div class="t " style="left:434.4px;top:1228.5px;font-size:24px;line-height:33px;color:#eae64a;font-family:'DejaVu Sans Mono','Liberation Mono',monospace;letter-spacing:-0.449px;">hint: is subject to change. To configure the initial branch name to use in all</div>
<div class="t " style="left:434.4px;top:1256.5px;font-size:24px;line-height:33px;color:#eae64a;font-family:'DejaVu Sans Mono','Liberation Mono',monospace;letter-spacing:-0.449px;">hint: of your new repositories, which will suppress this warning, call:</div>
<div class="t " style="left:434.4px;top:1284.5px;font-size:24px;line-height:33px;color:#eae64a;font-family:'DejaVu Sans Mono','Liberation Mono',monospace;letter-spacing:-0.449px;">hint:</div>
<div class="t " style="left:434.4px;top:1312.5px;font-size:24px;line-height:33px;color:#eae64a;font-family:'DejaVu Sans Mono','Liberation Mono',monospace;letter-spacing:-0.449px;">hint:   git config --global init.defaultBranch &lt;name&gt;</div>
<div class="t " style="left:434.4px;top:1340.5px;font-size:24px;line-height:33px;color:#eae64a;font-family:'DejaVu Sans Mono','Liberation Mono',monospace;letter-spacing:-0.449px;">hint:</div>
<div class="t " style="left:434.4px;top:1368.5px;font-size:24px;line-height:33px;color:#eae64a;font-family:'DejaVu Sans Mono','Liberation Mono',monospace;letter-spacing:-0.449px;">hint: Names commonly chosen instead of 'master' are 'main', 'trunk' and</div>
<div class="t " style="left:434.4px;top:1396.5px;font-size:24px;line-height:33px;color:#eae64a;font-family:'DejaVu Sans Mono','Liberation Mono',monospace;letter-spacing:-0.449px;">hint: 'development'. The just-created branch can be renamed via this command:</div>
<div class="t " style="left:434.4px;top:1424.5px;font-size:24px;line-height:33px;color:#eae64a;font-family:'DejaVu Sans Mono','Liberation Mono',monospace;letter-spacing:-0.449px;">hint:</div>
<div class="t " style="left:434.4px;top:1452.5px;font-size:24px;line-height:33px;color:#eae64a;font-family:'DejaVu Sans Mono','Liberation Mono',monospace;letter-spacing:-0.449px;">hint:   git branch -m &lt;name&gt;</div>
<div class="t " style="left:434.4px;top:1480.5px;font-size:24px;line-height:33px;color:#cccccc;font-family:'DejaVu Sans Mono','Liberation Mono',monospace;letter-spacing:-0.449px;">Initialized empty Git repository in /Users/danielkliewer/mindmap01/.git/</div>
<div class="t " style="left:434.4px;top:1508.5px;font-size:24px;line-height:33px;color:#cccccc;font-family:'DejaVu Sans Mono','Liberation Mono',monospace;letter-spacing:-0.449px;">(base) danielkliewer@Daniels-MacBook-Pro mindmap01 % </div>
<div class="r" style="left:1176.4px;top:1511px;width:14px;height:27px;background:#cccccc;"></div>
<div class="r" style="left:397px;top:1206px;width:1179px;height:5px;background:linear-gradient(rgba(0,0,0,0.9),rgba(0,0,0,0));"></div>
<div class="r" style="left:397px;top:1166px;width:1179px;height:40px;background:#181818;"></div>
<div class="t " style="left:434.4px;top:1173.7px;font-size:24px;line-height:33px;color:#cccccc;font-family:'DejaVu Sans Mono','Liberation Mono',monospace;letter-spacing:-0.449px;">(base) danielkliewer@Daniels-MacBook-Pro mindmap01 % git init</div>
<svg class="r" style="left:402px;top:1509px;" width="30" height="30" viewBox="0 0 30 30" fill="none"><path d="M11 1.5Q12.5 10 20.5 11.5Q12.5 13 11 21.5Q9.5 13 1.5 11.5Q9.5 10 11 1.5Z" stroke="#4c9df3" stroke-width="1.8" stroke-linejoin="round"/><path d="M22.5 17Q23.3 21.7 28 22.5Q23.3 23.3 22.5 28Q21.7 23.3 17 22.5Q21.7 21.7 22.5 17Z" stroke="#4c9df3" stroke-width="1.8" stroke-linejoin="round"/></svg>
<div class="r" style="left:1575px;top:1202px;width:1.5px;height:336px;background:#0c0c0c;"></div>
<div class="r" style="left:1575px;top:1201px;width:29px;height:1.5px;background:#0c0c0c;"></div>
<div class="r" style="left:1577px;top:1203px;width:9px;height:11px;background:#3d84ad;"></div>
<div class="r" style="left:1577px;top:1253px;width:9px;height:24px;background:#3d84ad;"></div>
<div class="r" style="left:1577px;top:1504px;width:9px;height:24px;background:#4e4e4e;"></div>
<div class="r" style="left:1604px;top:1166px;width:2px;height:372px;background:#2b2b2b;"></div>
<div class="r" style="left:1606px;top:1220px;width:90px;height:43px;background:#37373d;"></div>
<div class="r" style="left:1606px;top:1220px;width:2px;height:43px;background:#3b82d8;"></div>
<svg class="r" style="left:1637px;top:1184px;" width="28" height="28" viewBox="0 0 28 28" fill="none"><rect x="1" y="1" width="26" height="26" rx="3" stroke="#ccc" stroke-width="2"/><path d="M6 8L12 14L6 20M13 21H21" stroke="#ccc" stroke-width="2"/></svg>
<svg class="r" style="left:1637.05px;top:1225.69px;" width="27.9" height="29.76" viewBox="0 0 30 32" fill="none"><circle cx="15" cy="3.4" r="2.6" fill="#ccc"/><path d="M15 5V9" stroke="#ccc" stroke-width="2"/><rect x="4" y="9" width="22" height="21" rx="7" stroke="#ccc" stroke-width="2"/><path d="M4 16H2.5Q1 16 1 17.5V22.5Q1 24 2.5 24H4M26 16H27.5Q29 16 29 17.5V22.5Q29 24 27.5 24H26" stroke="#ccc" stroke-width="2"/><circle cx="11" cy="18" r="2.6" stroke="#ccc" stroke-width="1.8"/><circle cx="19" cy="18" r="2.6" stroke="#ccc" stroke-width="1.8"/><path d="M10.5 24.5Q15 27 19.5 24.5" stroke="#ccc" stroke-width="1.8"/></svg>
<div class="t " style="left:1738.4px;top:72.7px;font-size:22px;line-height:30px;color:#ccc;letter-spacing:-0.699px;">CLINE</div>
<svg class="r" style="left:2028px;top:73px;" width="26" height="26" viewBox="0 0 26 26" fill="none"><path d="M13 0V26M0 13H26" stroke="#ccc" stroke-width="2"/></svg>
<svg class="r" style="left:2082px;top:72.5px;" width="24" height="28" viewBox="0 0 24 28" fill="none"><rect x="1" y="1" width="22" height="7" rx="1.5" stroke="#ccc" stroke-width="1.8"/><path d="M5 4.5 H19" stroke="#ccc" stroke-width="1.8" stroke-dasharray="1.4 1.6"/><rect x="1" y="10.5" width="22" height="7" rx="1.5" stroke="#ccc" stroke-width="1.8"/><path d="M5 14 H19" stroke="#ccc" stroke-width="1.8" stroke-dasharray="1.4 1.6"/><rect x="1" y="20" width="22" height="7" rx="1.5" stroke="#ccc" stroke-width="1.8"/><path d="M5 23.5 H19" stroke="#ccc" stroke-width="1.8" stroke-dasharray="1.4 1.6"/></svg>
<svg class="r" style="left:2131px;top:72px;" width="30" height="30" viewBox="0 0 30 30" fill="none"><path d="M4.2 9.5A12.4 12.4 0 1 1 3.2 15" stroke="#ccc" stroke-width="2"/><path d="M2.5 2.5V10H10" stroke="#ccc" stroke-width="2"/><path d="M15 7.5V15.5L20.5 20" stroke="#ccc" stroke-width="2"/></svg>
<svg class="r" style="left:2182px;top:71px;" width="32" height="32" viewBox="-16 -16 32 32" fill="none"><circle cx="0" cy="0" r="15" stroke="#ccc" stroke-width="2"/><circle cx="0" cy="-3.3" r="5.4" stroke="#ccc" stroke-width="2"/><path d="M-9.9 11.1 A10.5 9.3 0 0 1 9.9 11.1" stroke="#ccc" stroke-width="2"/></svg>
<svg class="r" style="left:2234.2px;top:71.7px;" width="31.6" height="31.6" viewBox="-15.8 -15.8 31.6 31.6" fill="none"><path d="M-3.54 -9.13L-2.81 -13.51L2.81 -13.51L3.54 -9.13L3.95 -8.96L7.57 -11.54L11.54 -7.57L8.96 -3.95L9.13 -3.54L13.51 -2.81L13.51 2.81L9.13 3.54L8.96 3.95L11.54 7.57L7.57 11.54L3.95 8.96L3.54 9.13L2.81 13.51L-2.81 13.51L-3.54 9.13L-3.95 8.96L-7.57 11.54L-11.54 7.57L-8.96 3.95L-9.13 3.54L-13.51 2.81L-13.51 -2.81L-9.13 -3.54L-8.96 -3.95L-11.54 -7.57L-7.57 -11.54L-3.95 -8.96Z" stroke="#ccc" stroke-width="2" stroke-linejoin="miter"/><circle cx="0" cy="0" r="3.6" stroke="#ccc" stroke-width="2"/></svg>
<div class="r" style="left:1714px;top:138px;width:566px;height:341px;background:#252727;border:2px solid #3a3a3a;border-radius:10px;"></div>
<svg class="r" style="left:1738px;top:167px;" width="20" height="12" viewBox="0 0 20 12" fill="none"><path d="M1 1.5L10 10.5L19 1.5" stroke="#ccc" stroke-width="2"/></svg>
<svg class="r" style="left:1783px;top:164px;" width="26" height="26" viewBox="0 0 26 26" fill="none"><rect x="8" y="8" width="16" height="16" rx="3.5" stroke="#ccc" stroke-width="2"/><path d="M5 17H4.5Q1.5 17 1.5 14V4.5Q1.5 1.5 4.5 1.5H14Q17 1.5 17 4.5V5" stroke="#ccc" stroke-width="2"/></svg>
<svg class="r" style="left:1848.96px;top:164.12px;" width="22.08" height="25.76" viewBox="0 0 24 28" fill="none"><path d="M1 6H23M8 6V3.5Q8 1.5 10 1.5H14Q16 1.5 16 3.5V6M4 6V24Q4 26.5 6.5 26.5H17.5Q20 26.5 20 24V6" stroke="#ccc" stroke-width="2"/></svg>
<div class="r" style="left:2121px;top:156.5px;width:105px;height:32px;background:#cccccc;border-radius:16px;"></div>
<div class="t " style="left:2130.0px;top:157.5px;font-size:22px;line-height:30px;color:#3a3a3a;letter-spacing:1.247px;">$0.0000</div>
<svg class="r" style="left:2239.5px;top:164px;" width="17.5" height="17.5" viewBox="0 0 17.5 17.5" fill="none"><path d="M1 1L16.5 16.5M16.5 1L1 16.5" stroke="#ccc" stroke-width="2"/></svg>
<div class="r" style="left:2242px;top:201px;width:20px;height:32px;background:#4a4a4a;"></div>
<div class="t " style="left:1736.0px;top:209.5px;font-size:26px;line-height:36px;color:#ccc;letter-spacing:0.700px;">## Current Work</div>
<div class="t " style="left:1736.0px;top:247.0px;font-size:26px;line-height:36px;color:#ccc;letter-spacing:0.507px;">The user has provided a comprehensive</div>
<div class="t " style="left:1736.0px;top:284.0px;font-size:26px;line-height:36px;color:#ccc;letter-spacing:0.689px;">master prompt for building Mind Map AI,</div>
<div class="t " style="left:1736.0px;top:321.0px;font-size:26px;line-height:36px;color:#ccc;letter-spacing:0.585px;">a local LLM-powered personal</div>
<div class="t " style="left:1732.0px;top:379.5px;font-size:23px;line-height:32px;color:#ccc;letter-spacing:-0.320px;">33.1k</div>
<div class="r" style="left:1800px;top:387.5px;width:350px;height:15px;background:#393b3b;border-radius:7.5px;"></div>
<div class="r" style="left:1800px;top:387.5px;width:12px;height:15px;background:#cccccc;border-radius:7.5px 0 0 7.5px;"></div>
<div class="t " style="left:2160.0px;top:379.5px;font-size:23px;line-height:32px;color:#ccc;letter-spacing:-0.714px;">1.0m</div>
<svg class="r" style="left:2225px;top:380px;" width="30" height="30" viewBox="0 0 30 30" fill="none"><path d="M15 0V10M10.5 5.5L15 10L19.5 5.5M15 30V20M10.5 24.5L15 20L19.5 24.5" stroke="#ccc" stroke-width="1.9"/><path d="M0 15H30" stroke="#ccc" stroke-width="1.9" stroke-dasharray="4 3.4"/></svg>
<div class="r" style="left:1732px;top:431px;width:22px;height:22px;background:#ebc97f;border-radius:3px;"></div>
<div class="r" style="left:1762px;top:431px;width:22px;height:22px;background:#6aa5f8;border-radius:3px;"></div>
<div class="r" style="left:1792px;top:431px;width:22px;height:22px;background:#bd8cf5;border-radius:3px;"></div>
<div class="r" style="left:1822px;top:431px;width:22px;height:22px;background:#ebc97f;border-radius:3px;"></div>
<div class="r" style="left:1852px;top:431px;width:22px;height:22px;background:#bd8cf5;border-radius:3px;"></div>
<div class="r" style="left:1882px;top:431px;width:22px;height:22px;background:#6aa5f8;border-radius:3px;"></div>
<div class="r" style="left:1912px;top:431px;width:22px;height:22px;background:#6aa5f8;border-radius:3px;"></div>
<div class="r" style="left:1942px;top:431px;width:22px;height:22px;background:#6aa5f8;border-radius:3px;"></div>
<div class="r" style="left:1972px;top:431px;width:22px;height:22px;background:#6aa5f8;border-radius:3px;"></div>
<div class="r" style="left:2002px;top:431px;width:22px;height:22px;background:#6aa5f8;border-radius:3px;"></div>
<div class="r" style="left:2032px;top:431px;width:22px;height:22px;background:#6aa5f8;border-radius:3px;"></div>
<div class="r" style="left:2062px;top:431px;width:22px;height:22px;background:#6aa5f8;border-radius:3px;"></div>
<div class="r" style="left:1728px;top:513px;width:536px;height:72px;background:#1f1f1f;border:2px solid #333;border-radius:7px;"></div>
<div class="t " style="left:1750.0px;top:531.5px;font-size:26px;line-height:36px;color:#b4b4b4;letter-spacing:0.808px;">/docs/guides/user-guide.md</div>
<svg class="r" style="left:2216px;top:543px;" width="20" height="12" viewBox="0 0 20 12" fill="none"><path d="M1 1.5L10 10.5L19 1.5" stroke="#ccc" stroke-width="2"/></svg>
<svg class="r" style="left:1732px;top:620px;" width="16" height="21" viewBox="0 0 16 21" fill="none"><path d="M1.5 1H14.5V19.5L8 13L1.5 19.5Z" stroke="#6b6b6b" stroke-width="1.8"/></svg>
<div class="r" style="left:1760px;top:629px;width:501px;height:2px;background:repeating-linear-gradient(90deg,#585858 0 3px,transparent 3px 5.4px);"></div>
<svg class="r" style="left:1731px;top:684px;" width="28" height="23" viewBox="0 0 28 23" fill="none"><path d="M1 13L8.5 21L26.5 1" stroke="#89d185" stroke-width="2.2"/></svg>
<div class="t " style="left:1780.6px;top:675.5px;font-size:26px;line-height:36px;color:#e0e0e0;font-weight:700;letter-spacing:0.289px;">API Request</div>
<svg class="r" style="left:2238px;top:688px;" width="20" height="12" viewBox="0 0 20 12" fill="none"><path d="M1 1.5L10 10.5L19 1.5" stroke="#ccc" stroke-width="2"/></svg>
<svg class="r" style="left:1731px;top:755px;" width="30" height="31" viewBox="0 0 30 31" fill="none"><path d="M16 25H1V1H13L21 9V14" stroke="#ccc" stroke-width="2"/><path d="M12.5 1.5V9.5H20.5" stroke="#ccc" stroke-width="2"/><path d="M22 16V30M15 23H29" stroke="#ccc" stroke-width="2"/></svg>
<div class="t " style="left:1780.6px;top:750.0px;font-size:26px;line-height:36px;color:#e0e0e0;font-weight:700;letter-spacing:0.489px;">Cline wants to create a new file:</div>
<div class="r" style="left:1728px;top:808px;width:536px;height:72px;background:#1f1f1f;border:2px solid #333;border-radius:7px;"></div>
<div class="t " style="left:1750.0px;top:826.5px;font-size:26px;line-height:36px;color:#b4b4b4;letter-spacing:0.794px;">/docs/guides/developer-guide.md</div>
<svg class="r" style="left:2216px;top:838px;" width="20" height="12" viewBox="0 0 20 12" fill="none"><path d="M1 1.5L10 10.5L19 1.5" stroke="#ccc" stroke-width="2"/></svg>
<svg class="r" style="left:1732px;top:914.5px;" width="16" height="21" viewBox="0 0 16 21" fill="none"><path d="M1.5 1H14.5V19.5L8 13L1.5 19.5Z" stroke="#6b6b6b" stroke-width="1.8"/></svg>
<div class="r" style="left:1760px;top:924px;width:501px;height:2px;background:repeating-linear-gradient(90deg,#585858 0 3px,transparent 3px 5.4px);"></div>
<svg class="r" style="left:1731px;top:971px;" width="16" height="12" viewBox="0 0 16 12" fill="none"><path d="M1.5 10.5Q5 3 14 1.8" stroke="#3b82d8" stroke-width="3.2"/></svg>
<div class="t " style="left:1780.6px;top:970.0px;font-size:26px;line-height:36px;color:#e0e0e0;font-weight:700;letter-spacing:0.556px;">API Request...</div>
<svg class="r" style="left:2238px;top:982px;" width="20" height="12" viewBox="0 0 20 12" fill="none"><path d="M1 1.5L10 10.5L19 1.5" stroke="#ccc" stroke-width="2"/></svg>
<svg class="r" style="left:1731px;top:1049px;" width="30" height="31" viewBox="0 0 30 31" fill="none"><path d="M16 25H1V1H13L21 9V14" stroke="#ccc" stroke-width="2"/><path d="M12.5 1.5V9.5H20.5" stroke="#ccc" stroke-width="2"/><path d="M22 16V30M15 23H29" stroke="#ccc" stroke-width="2"/></svg>
<div class="t " style="left:1780.6px;top:1044.5px;font-size:26px;line-height:36px;color:#e0e0e0;font-weight:700;letter-spacing:0.489px;">Cline wants to create a new file:</div>
<div class="r" style="left:1728px;top:1103px;width:536px;height:72px;background:#1f1f1f;border:2px solid #333;border-radius:7px;"></div>
<div class="t " style="left:1750.0px;top:1121.5px;font-size:26px;line-height:36px;color:#858585;letter-spacing:0.867px;">/docs/guides/deployment-guide.md</div>
<svg class="r" style="left:2216px;top:1133px;" width="20" height="12" viewBox="0 0 20 12" fill="none"><path d="M1 1.5L10 10.5L19 1.5" stroke="#858585" stroke-width="2"/></svg>
<div class="r" style="left:1728px;top:1205px;width:538px;height:70px;background:#1a1a1a;border-top:2px solid #2c2c2c;border-radius:22px 22px 0 0;"></div>
<div class="t " style="left:1749.0px;top:1220.5px;font-size:26px;line-height:36px;color:#ccc;letter-spacing:0.728px;">Auto-approve:</div>
<svg class="r" style="left:1950px;top:1229px;" width="20" height="18" viewBox="0 0 20 18" fill="none"><path d="M1 10L6.5 16.5L19 1" stroke="#a0a0a0" stroke-width="2"/></svg>
<div class="t" style="left:1980.6px;top:1220.5px;width:214px;overflow:hidden;font-size:26px;line-height:36px;color:#a0a0a0;letter-spacing:0.15px">Read, Edit, Safe C</div>
<svg class="r" style="left:2216px;top:1231px;" width="20" height="12" viewBox="0 0 20 12" fill="none"><path d="M1 10.5L10 1.5L19 10.5" stroke="#ccc" stroke-width="2"/></svg>
<div class="r" style="left:1728px;top:1270.5px;width:538px;height:51.5px;background:#313131;border:2px solid #3c3c3c;border-radius:3px;"></div>
<div class="t " style="left:1955.0px;top:1279.0px;font-size:27px;line-height:37px;color:#e0e0e0;letter-spacing:-0.009px;">Cancel</div>
<div class="r" style="left:1726px;top:1342px;width:542px;height:126px;background:#313131;border:2px solid #3a3a3a;border-radius:4px;"></div>
<div class="t " style="left:1744.4px;top:1357.5px;font-size:26px;line-height:36px;color:#7d7d7d;letter-spacing:-0.610px;">Type a message...</div>
<div class="t " style="left:1738.8px;top:1421.0px;font-size:21px;line-height:29px;color:#666;letter-spacing:0.210px;">Type @ for context, / for slash commands ...</div>
<svg class="r" style="left:2225px;top:1423px;" width="30" height="25" viewBox="0 0 30 25" fill="none"><path d="M1.5 1.5L28.5 12.5L1.5 23.5L5 12.5ZM5 12.5H28" stroke="#6a6a6a" stroke-width="1.9" stroke-linejoin="round"/></svg>
<div class="t " style="left:1727.5px;top:1482.0px;font-size:25px;line-height:35px;color:#ccc;">@</div>
<svg class="r" style="left:1776px;top:1492px;" width="18" height="18" viewBox="0 0 18 18" fill="none"><path d="M9 0V18M0 9H18" stroke="#ccc" stroke-width="2"/></svg>
<svg class="r" style="left:1821.14px;top:1491.08px;" width="18.72" height="21.84" viewBox="0 0 24 28" fill="none"><rect x="1" y="1" width="22" height="7" rx="1.5" stroke="#ccc" stroke-width="1.8"/><path d="M5 4.5 H19" stroke="#ccc" stroke-width="1.8" stroke-dasharray="1.4 1.6"/><rect x="1" y="10.5" width="22" height="7" rx="1.5" stroke="#ccc" stroke-width="1.8"/><path d="M5 14 H19" stroke="#ccc" stroke-width="1.8" stroke-dasharray="1.4 1.6"/><rect x="1" y="20" width="22" height="7" rx="1.5" stroke="#ccc" stroke-width="1.8"/><path d="M5 23.5 H19" stroke="#ccc" stroke-width="1.8" stroke-dasharray="1.4 1.6"/></svg>
<svg class="r" style="left:1865px;top:1489px;" width="23" height="24" viewBox="0 0 23 24" fill="none"><path d="M2 5Q7 3 11.5 5Q16 7 21 5M11.5 1V22M6 22.5H17" stroke="#ccc" stroke-width="1.8"/><path d="M0.8 14L4.5 5.5L8.2 14Q4.5 18 0.8 14ZM14.8 14L18.5 5.5L22.2 14Q18.5 18 14.8 14Z" stroke="#ccc" stroke-width="1.6" stroke-linejoin="round"/></svg>
<div class="t " style="left:1902.0px;top:1487.0px;font-size:21px;line-height:29px;color:#b0b0b0;letter-spacing:0.484px;">cline:cline/code-super...</div>
<div class="r" style="left:2142px;top:1484px;width:129px;height:35px;background:linear-gradient(90deg,#1f1f1f 0 65px,#3277d2 65px);border-radius:18px;"></div>
<div class="r" style="left:2142px;top:1484px;width:129px;height:35px;background:transparent;border:2px solid #3a3a3a;border-radius:18px;"></div>
<div class="t " style="left:2156.5px;top:1487.0px;font-size:21px;line-height:29px;color:#ccc;letter-spacing:-0.339px;">Plan</div>
<div class="t " style="left:2225.0px;top:1487.0px;font-size:21px;line-height:29px;color:#fff;letter-spacing:0.836px;">Act</div>
<svg class="r" style="left:2318px;top:74px;" width="52" height="52" viewBox="0 0 52 52" fill="none"><circle cx="20" cy="20" r="15" stroke="#868686" stroke-width="3"/><path d="M30.5 30.5L47 47" stroke="#868686" stroke-width="3"/></svg>
<svg class="r" style="left:2320px;top:166px;" width="52" height="58" viewBox="0 0 52 58" fill="none"><circle cx="13.4" cy="13" r="5.4" stroke="#868686" stroke-width="3.0"/><circle cx="34.5" cy="22.6" r="5.4" stroke="#868686" stroke-width="3.0"/><circle cx="13.4" cy="46.3" r="5.4" stroke="#868686" stroke-width="3.0"/><path d="M13.4 18.5V41M34.5 28V30Q34.5 37 27 37H24Q19 37 18 41.5" stroke="#868686" stroke-width="3.0"/></svg>
<div class="r" style="left:2338.5px;top:196px;width:37px;height:32px;background:#3277d2;border-radius:16px;"></div>
<div class="t " style="left:2346.5px;top:199.0px;font-size:19px;line-height:26px;color:#fff;font-weight:700;letter-spacing:-0.125px;">12</div>
<svg class="r" style="left:2316px;top:264px;" width="56" height="58" viewBox="0 0 56 58" fill="none"><path d="M20.5 26.5V6L50 24L31 36" stroke="#868686" stroke-width="3.0" stroke-linejoin="round"/><ellipse cx="16.3" cy="40.5" rx="8" ry="10.5" stroke="#868686" stroke-width="3.0"/><path d="M8.5 37H24M3 41.5H8M24.5 41.5H29.5M4.5 31L9.5 35M28 31L23 35M4.5 52L9.5 47.5M28 52L23 47.5M11 31.5Q16.3 25 21.6 31.5" stroke="#868686" stroke-width="3.0"/></svg>
<svg class="r" style="left:2318px;top:364px;" width="56" height="52" viewBox="0 0 56 52" fill="none"><path d="M26 38.5H5V6.5H45V24" stroke="#868686" stroke-width="3.0" stroke-linejoin="round"/><path d="M13 44.5H24" stroke="#868686" stroke-width="3.0"/><circle cx="37.3" cy="35.5" r="11" stroke="#868686" stroke-width="3.0"/><path d="M31.5 32L35 35.5L31.5 39M43.5 31L40 34.5L43.5 38" stroke="#868686" stroke-width="1.9"/></svg>
<svg class="r" style="left:2322px;top:460px;" width="48" height="48" viewBox="0 0 48 48" fill="none"><path d="M4 8.5H22V44H4ZM4 26H41V44H22" stroke="#868686" stroke-width="3.0" stroke-linejoin="round"/><path d="M33.8 3.5L44.3 14L33.8 24.5L23.3 14Z" stroke="#868686" stroke-width="3.0" stroke-linejoin="round"/></svg>
<svg class="r" style="left:2324px;top:560px;" width="40" height="40" viewBox="0 0 40 40" fill="none"><path d="M20 0C21 12 28 19 40 20C28 21 21 28 20 40C19 28 12 21 0 20C12 19 19 12 20 0Z" fill="#868686"/></svg>
<svg class="r" style="left:2318px;top:650px;" width="52" height="52" viewBox="0 0 52 52" fill="none"><circle cx="26" cy="26" r="22.8" stroke="#868686" stroke-width="3.0"/><circle cx="22.3" cy="14" r="4.7" fill="#868686"/><circle cx="34" cy="26.3" r="4.7" fill="#868686"/><circle cx="22.3" cy="37.3" r="4.7" fill="#868686"/><path d="M22.3 14V37.3M22.3 15L34 26.3" stroke="#868686" stroke-width="2.4"/></svg>
<svg class="r" style="left:2318px;top:746px;" width="52" height="52" viewBox="0 0 52 52" fill="none"><path d="M27 48.7A22.8 22.8 0 1 1 48.5 22" stroke="#868686" stroke-width="3.0"/><circle cx="22.3" cy="14" r="4.7" fill="#868686"/><circle cx="22.3" cy="37.3" r="4.7" fill="#868686"/><path d="M22.3 14V37.3M22.3 15L31 23.5" stroke="#868686" stroke-width="2.4"/><circle cx="37.5" cy="37" r="9.6" stroke="#868686" stroke-width="5.2"/><circle cx="37" cy="36.5" r="4" stroke="#181818" stroke-width="1.8"/><path d="M40 39.5L44 43.5" stroke="#181818" stroke-width="1.8"/></svg>
<svg class="r" style="left:2320px;top:844px" width="48" height="48" viewBox="0 0 24 24"><path fill="#868686" d="M22.2819 9.8211a5.9847 5.9847 0 0 0-.5157-4.9108 6.0462 6.0462 0 0 0-6.5098-2.9A6.0651 6.0651 0 0 0 4.9807 4.1818a5.9847 5.9847 0 0 0-3.9977 2.9 6.0462 6.0462 0 0 0 .7427 7.0966 5.98 5.98 0 0 0 .511 4.9107 6.051 6.051 0 0 0 6.5146 2.9001A5.9847 5.9847 0 0 0 13.2599 24a6.0557 6.0557 0 0 0 5.7718-4.2058 5.9894 5.9894 0 0 0 3.9977-2.9001 6.0557 6.0557 0 0 0-.7475-7.0729zm-9.022 12.6081a4.4755 4.4755 0 0 1-2.8764-1.0408l.1419-.0804 4.7783-2.7582a.7948.7948 0 0 0 .3927-.6813v-6.7369l2.02 1.1686a.071.071 0 0 1 .038.052v5.5826a4.504 4.504 0 0 1-4.4945 4.4944zm-9.6607-4.1254a4.4708 4.4708 0 0 1-.5346-3.0137l.142.0852 4.783 2.7582a.7712.7712 0 0 0 .7806 0l5.8428-3.3685v2.3324a.0804.0804 0 0 1-.0332.0615L9.74 19.9502a4.4992 4.4992 0 0 1-6.1408-1.6464zM2.3408 7.8956a4.485 4.485 0 0 1 2.3655-1.9728V11.6a.7664.7664 0 0 0 .3879.6765l5.8144 3.3543-2.0201 1.1685a.0757.0757 0 0 1-.071 0l-4.8303-2.7865A4.504 4.504 0 0 1 2.3408 7.872zm16.5963 3.8558L13.1038 8.364 15.1192 7.2a.0757.0757 0 0 1 .071 0l4.8303 2.7913a4.4944 4.4944 0 0 1-.6765 8.1042v-5.6772a.79.79 0 0 0-.407-.667zm2.0107-3.0231l-.142-.0852-4.7735-2.7818a.7759.7759 0 0 0-.7854 0L9.409 9.2297V6.8974a.0662.0662 0 0 1 .0284-.0615l4.8303-2.7866a4.4992 4.4992 0 0 1 6.6802 4.66zM8.3065 12.863l-2.02-1.1638a.0804.0804 0 0 1-.038-.0567V6.0742a4.4992 4.4992 0 0 1 7.3757-3.4537l-.142.0805L8.704 5.459a.7948.7948 0 0 0-.3927.6813zm1.0976-2.3654l2.602-1.4998 2.6069 1.4998v2.9994l-2.5974 1.4997-2.6067-1.4997Z"/></svg>
<svg class="r" style="left:2318px;top:936px;" width="52" height="56" viewBox="0 0 52 56" fill="none"><circle cx="25.6" cy="8" r="5.6" fill="#d7d7d7"/><path d="M17 13.5H35Q45 13.5 45 23V27L47.5 32.5L45 38V42Q45 51.5 35 51.5H17Q7 51.5 7 42V38L4.5 32.5L7 27V23Q7 13.5 17 13.5Z" stroke="#d7d7d7" stroke-width="3" stroke-linejoin="round"/><rect x="16" y="24.6" width="6.2" height="15.4" rx="3.1" fill="#d7d7d7"/><rect x="28.7" y="24.6" width="6.2" height="15.4" rx="3.1" fill="#d7d7d7"/></svg>
<svg class="r" style="left:2320px;top:1036px;" width="48" height="48" viewBox="0 0 48 48" fill="none"><rect x="3.6" y="3.6" width="18" height="17.4" rx="3" stroke="#868686" stroke-width="3.0"/><rect x="26.6" y="26.6" width="18" height="17.4" rx="3" stroke="#868686" stroke-width="3.0"/><path d="M12.5 21V31Q12.5 35.3 17 35.3H26.5" stroke="#868686" stroke-width="3.0"/></svg>
<div class="r" style="left:2325.8px;top:1152.8px;width:6px;height:6px;background:#868686;border-radius:50%;"></div>
<div class="r" style="left:2340.9px;top:1152.8px;width:6px;height:6px;background:#868686;border-radius:50%;"></div>
<div class="r" style="left:2355.9px;top:1152.8px;width:6px;height:6px;background:#868686;border-radius:50%;"></div>
<svg class="r" style="left:2319.4px;top:1369.1px;" width="49.2" height="49.2" viewBox="-24.6 -24.6 49.2 49.2" fill="none"><circle cx="0" cy="0" r="22.6" stroke="#868686" stroke-width="3"/><circle cx="0" cy="-4.52" r="8.814" stroke="#868686" stroke-width="3"/><path d="M-13.56 16.724 Q-9.492 5.424 0 4.972 Q9.492 5.424 13.56 16.724" stroke="#868686" stroke-width="3"/></svg>
<svg class="r" style="left:2322px;top:1467.7px;" width="44" height="44" viewBox="-22 -22 44 44" fill="none"><path d="M-5.13 -13.24L-4.07 -19.58L4.07 -19.58L5.13 -13.24L5.73 -12.99L10.97 -16.72L16.72 -10.97L12.99 -5.73L13.24 -5.13L19.58 -4.07L19.58 4.07L13.24 5.13L12.99 5.73L16.72 10.97L10.97 16.72L5.73 12.99L5.13 13.24L4.07 19.58L-4.07 19.58L-5.13 13.24L-5.73 12.99L-10.97 16.72L-16.72 10.97L-12.99 5.73L-13.24 5.13L-19.58 4.07L-19.58 -4.07L-13.24 -5.13L-12.99 -5.73L-16.72 -10.97L-10.97 -16.72L-5.73 -12.99Z" stroke="#868686" stroke-width="3" stroke-linejoin="miter"/><circle cx="0" cy="0" r="5" stroke="#868686" stroke-width="3"/></svg>
<div class="r" style="left:0px;top:1540px;width:60px;height:32px;background:#3277d2;"></div>
<svg class="r" style="left:17px;top:1548px;" width="28" height="24" viewBox="0 0 28 24" fill="none"><path d="M2.5 9L9.5 16L2.5 23M23.5 2.5L17.5 8.5L23.5 14.5" stroke="#fff" stroke-width="2"/></svg>
<svg class="r" style="left:79px;top:1545px;" width="22" height="30" viewBox="0 0 22 30" fill="none"><circle cx="5" cy="5" r="3.6" stroke="#ccc" stroke-width="1.9"/><circle cx="17" cy="9.5" r="3.6" stroke="#ccc" stroke-width="1.9"/><circle cx="5" cy="25" r="3.6" stroke="#ccc" stroke-width="1.9"/><path d="M5 8.6V21.4M17 13V14Q17 18 12 18.5Q6 19 5 21.4" stroke="#ccc" stroke-width="1.9"/></svg>
<div class="t " style="left:111.0px;top:1543.5px;font-size:24px;line-height:33px;color:#ccc;letter-spacing:0.883px;">master*</div>
<svg class="r" style="left:213px;top:1547px;" width="26" height="26" viewBox="0 0 26 26" fill="none"><path d="M8 19H6.5A5.5 5.5 0 0 1 6 8A7 7 0 0 1 19.5 7A6 6 0 0 1 19.5 19H18" stroke="#ccc" stroke-width="1.9"/><path d="M13 24V11M8.5 15.5L13 11L17.5 15.5" stroke="#ccc" stroke-width="1.9"/></svg>
<svg class="r" style="left:273px;top:1544px;" width="24" height="32" viewBox="0 0 24 32" fill="none"><circle cx="5" cy="5" r="3.4" stroke="#ccc" stroke-width="1.9"/><circle cx="5" cy="26" r="3.4" stroke="#ccc" stroke-width="1.9"/><circle cx="18" cy="15.5" r="3.4" stroke="#ccc" stroke-width="1.9"/><path d="M5 8.4V22.6M11.5 2V30M11.5 15.5H14.6" stroke="#ccc" stroke-width="1.9"/></svg>
<svg class="r" style="left:332px;top:1546px;" width="28" height="28" viewBox="0 0 28 28" fill="none"><path d="M26.5 1.5Q15 1.5 9 10L6 17L11 22L18 19Q26.5 13 26.5 1.5Z" stroke="#ccc" stroke-width="1.9" stroke-linejoin="round"/><path d="M9.5 10H4L1.5 15.5L6.5 16M18 18.5V24L12.5 26.5L12 21.5M5 20Q2 22 2 26Q6 26 8 23" stroke="#ccc" stroke-width="1.9" stroke-linejoin="round"/></svg>
<svg class="r" style="left:362px;top:1547px;" width="24" height="26" viewBox="0 0 24 26" fill="none"><path d="M23 1L18.5 5.5M14.5 3.5L20.5 9.5L17 13Q13 16 10 13Q7 10 10.5 7ZM10 14L5.5 18.5M7 11L12.5 16.5M5.5 13L10.5 18L8 20.5Q5.5 22.5 3.5 20.5Q1.5 18.5 3.5 16Z" stroke="#ccc" stroke-width="1.8" stroke-linejoin="round"/><path d="M3 21L0.5 23.5" stroke="#ccc" stroke-width="1.8"/></svg>
<div class="t " style="left:395.0px;top:1543.5px;font-size:24px;line-height:33px;color:#ccc;letter-spacing:0.619px;">Launchpad</div>
<svg class="r" style="left:553px;top:1548px;" width="24" height="24" viewBox="0 0 24 24" fill="none"><circle cx="12" cy="12" r="10.6" stroke="#ccc" stroke-width="1.9"/><path d="M7.5 7.5L16.5 16.5M16.5 7.5L7.5 16.5" stroke="#ccc" stroke-width="1.9"/></svg>
<div class="t " style="left:586.5px;top:1543.5px;font-size:24px;line-height:33px;color:#ccc;">0</div>
<svg class="r" style="left:610px;top:1548px;" width="25" height="24" viewBox="0 0 25 24" fill="none"><path d="M12.5 1.5L24 22.5H1Z" stroke="#ccc" stroke-width="1.9" stroke-linejoin="round"/><path d="M12.5 9V15.5M12.5 17.6V20" stroke="#ccc" stroke-width="2"/></svg>
<div class="t " style="left:643.5px;top:1543.5px;font-size:24px;line-height:33px;color:#ccc;">0</div>
<div class="t " style="left:1026.0px;top:1543.5px;font-size:24px;line-height:33px;color:#ccc;letter-spacing:0.594px;">Ln 1, Col 1</div>
<div class="t " style="left:1181.4px;top:1543.5px;font-size:24px;line-height:33px;color:#ccc;letter-spacing:0.533px;">Spaces: 4</div>
<div class="t " style="left:1325.6px;top:1543.5px;font-size:24px;line-height:33px;color:#ccc;letter-spacing:1.004px;">UTF-8</div>
<div class="t " style="left:1431.0px;top:1543.5px;font-size:24px;line-height:33px;color:#ccc;letter-spacing:-2.000px;">LF</div>
<div class="t " style="left:1492.0px;top:1542.5px;font-size:24px;line-height:33px;color:#ccc;letter-spacing:8.969px;">{}</div>
<div class="t " style="left:1529.0px;top:1543.5px;font-size:24px;line-height:33px;color:#ccc;letter-spacing:0.842px;">Markdown</div>
<svg class="r" style="left:1677px;top:1546px;" width="30" height="28" viewBox="0 0 30 28" fill="none"><path d="M4 12V8Q4 3 9 3H12Q14 3 15 5Q16 3 18 3H21Q26 3 26 8V12Q29 13.5 29 17V20Q23 26 15 26Q7 26 1 20V17Q1 13.5 4 12Z" stroke="#ccc" stroke-width="1.9" stroke-linejoin="round"/><path d="M5 11Q10 12.5 14 9.5M25 11Q20 12.5 16 9.5M11.5 16.5V20M18.5 16.5V20" stroke="#ccc" stroke-width="1.9"/><path d="M2 1.5L28 27" stroke="#181818" stroke-width="5"/><path d="M2.5 1.5L28 27" stroke="#ccc" stroke-width="1.9"/></svg>
<svg class="r" style="left:1741px;top:1547px;" width="24" height="28" viewBox="0 0 24 28" fill="none"><circle cx="12" cy="11" r="3" stroke="#ccc" stroke-width="1.8"/><path d="M6.5 17A7.6 7.6 0 1 1 17.5 17M4 21A11 11 0 1 1 20 21" stroke="#ccc" stroke-width="1.8"/><path d="M12 14.5L9.5 27H14.5Z" stroke="#ccc" stroke-width="1.6" stroke-linejoin="round"/></svg>
<div class="t " style="left:1773.5px;top:1543.5px;font-size:24px;line-height:33px;color:#ccc;letter-spacing:0.216px;">Go Live</div>
<div class="r" style="left:1874px;top:1540px;width:68px;height:32px;background:#7a6520;"></div>
<svg class="r" style="left:1893px;top:1544px;" width="32" height="28" viewBox="0 0 32 28" fill="none"><path d="M4 2L28 28" stroke="#fff" stroke-width="2.2"/><path d="M27 3Q20 12 20.5 15.5Q21 19 26 27Q17 21 14 20.5Q10 20 4 27Q10 18 10.5 15Q10 11 5 3Q13 10 16 10.5Q20 10 27 3Z" fill="#fff"/></svg>
<svg class="r" style="left:1959px;top:1551px;" width="26" height="18" viewBox="0 0 26 18" fill="none"><path d="M7 2L1 9L7 16M19 2L25 9L19 16M15.5 1L10.5 17" stroke="#ccc" stroke-width="1.9"/></svg>
<svg class="r" style="left:2020px;top:1550px;" width="24" height="20" viewBox="0 0 24 20" fill="none"><path d="M1 11L7 18L23 1" stroke="#ccc" stroke-width="2"/></svg>
<div class="t " style="left:2053.0px;top:1543.5px;font-size:24px;line-height:33px;color:#ccc;letter-spacing:0.328px;">Continue (NE)</div>
<svg class="r" style="left:2242px;top:1550px;" width="28" height="20" viewBox="0 0 28 20" fill="none"><path d="M1 12L6 18L19 2M11.5 16L13.5 18L27 2" stroke="#ccc" stroke-width="1.9"/></svg>
<div class="t " style="left:2278.7px;top:1543.5px;font-size:24px;line-height:33px;color:#ccc;letter-spacing:0.846px;">Prettier</div>
</div></body></html>
